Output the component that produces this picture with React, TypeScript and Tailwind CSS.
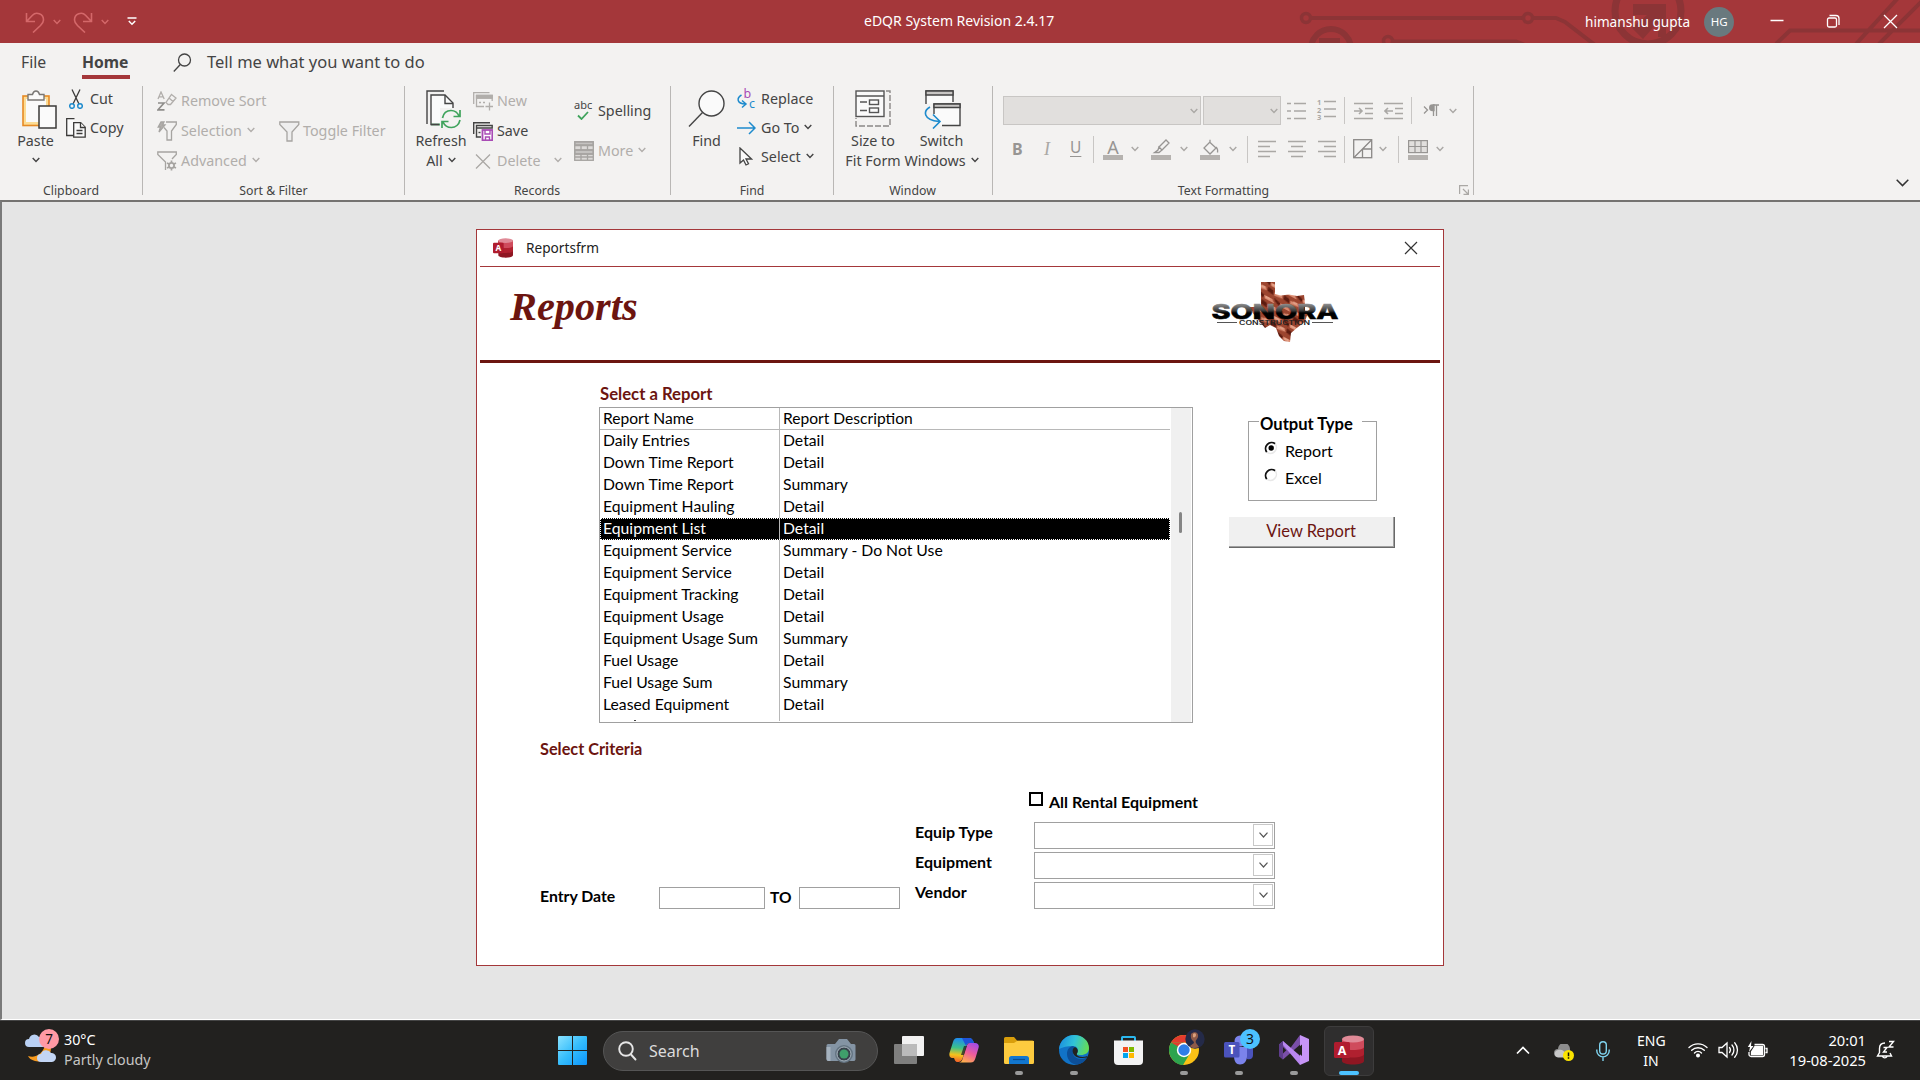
import React from 'react';

type P = { className?: string };

const Chevron = ({ className = '' }: P) => (
  <svg className={'shrink-0 ' + className} width="8" height="6" viewBox="0 0 8 6" fill="none" stroke="currentColor" strokeWidth="1.4">
    <path d="M0.7 1 4 4.5 7.3 1" />
  </svg>
);

const Sep = ({ className = '' }: P) => <div className={'w-px h-[27px] shrink-0 bg-[#c8c6c4] ' + className} />;

const AccessIcon = ({ className = '' }: P) => (
  <svg className={'shrink-0 ' + className} viewBox="0 0 30 30">
    <path d="M8 4v22c0 2 5 3.500 11 3.500s11-1.500 11-3.500V4z" fill="#8f1622" />
    <path d="M8 4v15c0 2 5 3.500 11 3.500s11-1.500 11-3.500V4z" fill="#b0202f" />
    <path d="M8 4v8c0 2 5 3 11 3s11-1 11-3V4z" fill="#cf4b5c" />
    <ellipse cx="19" cy="4" rx="11" ry="3.600" fill="#e08a97" />
    <rect x="0" y="7" width="16" height="16" rx="1.500" fill="#b01c2e" />
    <text x="8" y="19.500" textAnchor="middle" fill="#fff" fontFamily="Noto Sans, sans-serif" fontWeight="700" fontSize="12.500">A</text>
  </svg>
);

/* ---------------- Title bar ---------------- */

const Circuit = () => (
  <svg className="absolute left-[1290px] top-0" width="630" height="43" viewBox="1290 0 630 43" fill="none" stroke="#8c3436" strokeWidth="4">
    <circle cx="1306" cy="18" r="4.500" strokeWidth="3.500" />
    <path d="M1312 18h210" />
    <circle cx="1528" cy="18" r="4.500" strokeWidth="3.500" />
    <path d="M1534 18h22l9 4 30 23" />
    <circle cx="1331" cy="49" r="20" strokeWidth="6" />
    <rect x="1319" y="38" width="21" height="8" fill="#8c3436" stroke="none" />
    <circle cx="1388" cy="41" r="4.500" strokeWidth="3.500" />
    <path d="M1394 41.500h122l8 3" />
    <circle cx="1648" cy="11" r="33" strokeWidth="7" />
    <path d="M1633 4h33v33h-8V22l-15 17-11-11 15-13h-14z" fill="#8c3436" stroke="none" />
    <path d="M1776 44l14-13.500h130M1856 44 1898 -2M1879 44 1922 1" />
  </svg>
);

const TitleBar = () => (
  <header className="relative flex h-[43px] shrink-0 items-center whitespace-nowrap bg-[#a4373a] text-white">
    <Circuit />
    <div className="relative flex w-[864px] shrink-0 items-center text-[#d4686a]">
      <svg className="ml-[25px]" width="20" height="22" viewBox="0 0 20 22" fill="none" stroke="currentColor" strokeWidth="1.600">
        <path d="M1.500 2v8.500H10M2 10 7.500 4.200C11 .5 18.500 2.500 18.500 9c0 2.500-1.500 4-3 5.500L8 21.500" />
      </svg>
      <Chevron className="ml-[8px]" />
      <svg className="ml-[12px]" width="20" height="22" viewBox="0 0 20 22" fill="none" stroke="currentColor" strokeWidth="1.600">
        <path d="M18.500 2v8.500H10M18 10l-5.500-5.800C9 .5 1.500 2.500 1.500 9c0 2.500 1.500 4 3 5.500L12 21.500" />
      </svg>
      <Chevron className="ml-[8px]" />
      <svg className="ml-[18px] text-white" width="10" height="9" viewBox="0 0 10 9" fill="none" stroke="currentColor" strokeWidth="1.500">
        <path d="M0.500 1h9M1.800 4 5 7.200 8.200 4" />
      </svg>
    </div>
    <div className="relative w-[721px] shrink-0 text-[14px] leading-[20px] -mt-0.5">eDQR System Revision 2.4.17</div>
    <div className="relative text-[13.600px] leading-[20px]">himanshu gupta</div>
    <div className="relative ml-[14px] grid h-[30px] w-[30px] shrink-0 place-items-center rounded-full bg-[#69797e] text-[11.500px]">HG</div>
    <svg className="relative ml-[36px] shrink-0" width="152" height="20" viewBox="0 0 152 20" fill="none" stroke="#fff" strokeWidth="1.300">
      <path d="M7.500 9.500h13M121 4l13 13M134 4l-13 13" transform="translate(-7 -1)" />
      <rect x="57.500" y="6" width="9" height="9" rx="1.500" />
      <path d="M59.500 3.500h6.500a3 3 0 0 1 3 3v6.500" />
    </svg>
  </header>
);

const Tabs = () => (
  <nav className="flex h-[40px] shrink-0 text-[16.500px] leading-[37px] text-[#444]">
    <div className="ml-[21px] w-[61px] text-[15.800px] leading-[38px]">File</div>
    <div className="flex w-[48px] flex-col">
      <div className="h-[32px] text-[15.700px] font-bold leading-[38px]">Home</div>
      <div className="h-1 bg-[#a4373a]" />
    </div>
    <svg className="ml-[43px] mt-[10px]" width="19" height="20" viewBox="0 0 19 20" fill="none" stroke="#444" strokeWidth="1.300">
      <circle cx="11.500" cy="7" r="6" />
      <path d="M7.300 11.500 0.800 18.500" />
    </svg>
    <div className="ml-[15px]">Tell me what you want to do</div>
  </nav>
);

/* ---------------- Ribbon icons ---------------- */

const PasteIcon = () => (
  <svg width="36" height="39" viewBox="0 0 36 39" fill="none">
    <rect x="2" y="6" width="26" height="29.500" fill="#fcdc94" stroke="#e68a24" strokeWidth="1.600" />
    <rect x="5" y="9" width="20" height="23" fill="#fafafa" />
    <path d="M7 4.500h4.500C12 2.500 13 1 15 1s3 1.500 3.500 3.500H23V10H7z" fill="#fafafa" stroke="#797774" strokeWidth="1.400" />
    <rect x="18" y="16" width="17" height="22" fill="#fafafa" stroke="#3b3a39" strokeWidth="1.500" />
  </svg>
);

const CutIcon = () => (
  <svg width="14" height="20" viewBox="0 0 14 20" fill="none">
    <path d="M3 .5 10 15M11 .5 4 15" stroke="#3b3a39" strokeWidth="1.300" />
    <circle cx="3" cy="17" r="2.300" stroke="#1e8bcd" strokeWidth="1.500" />
    <circle cx="11" cy="17" r="2.300" stroke="#1e8bcd" strokeWidth="1.500" />
  </svg>
);

const CopyIcon = () => (
  <svg width="20" height="20" viewBox="0 0 20 20" fill="#fafafa" stroke="#3b3a39" strokeWidth="1.300">
    <path d="M7 17.500H.7V.7H8.500" />
    <path d="M7.700 4.700h7l4.500 4.500v10H7.700z" />
    <path d="M14.500 4.700v4.800h4.700M10.500 12.500h6M10.500 15.500h6" />
  </svg>
);

const RemoveSortIcon = () => (
  <svg width="20" height="20" viewBox="0 0 20 20" fill="none" stroke="#b1aeab" strokeWidth="1.300">
    <path d="M1 8 4 1l3.200 7M2 5.800h4.200" />
    <path d="M1 12h6L1 18.800h6.500" stroke="#8f8d8a" strokeWidth="1.700" />
    <path d="m14.500 3.500 4.500 3.500-5.500 6.500H11L9 11.500zM12 7l4 3.500" />
  </svg>
);

const Funnel = () => (
  <svg width="21" height="21" viewBox="0 0 21 21" fill="#eee" stroke="#a6a4a1" strokeWidth="1.300">
    <path d="M.8 1h19v2.500L13 11v9H8v-9L.8 3.500z" />
  </svg>
);

const SelectionIcon = () => (
  <svg width="20" height="20" viewBox="0 0 20 20" fill="none" stroke="#a6a4a1" strokeWidth="1.300">
    <path d="M9 1h10.300v2.500L14.500 10v9H10v-9L7 6.500" />
    <path d="M4 1h3L5.500 4H8l-6 7 1.500-5H1.200z" fill="#b1aeab" />
  </svg>
);

const AdvancedIcon = () => (
  <svg width="20" height="20" viewBox="0 0 20 20" fill="none" stroke="#a6a4a1" strokeWidth="1.300">
    <path d="M8.500 19V11L.8 3.500V1h18.500v2.500L15 8" />
    <circle cx="14.500" cy="14.500" r="2.600" strokeWidth="1.800" />
    <path d="M14.500 9.500v2M14.500 17.500v2M10 12l2 1M17 16l2 1M10 17l2-1M17 13l2-1" strokeWidth="1.700" />
  </svg>
);

const RefreshIcon = () => (
  <svg width="36" height="39" viewBox="0 0 36 39" fill="none" stroke="#444" strokeWidth="1.400">
    <path d="M1 34V1h17" />
    <path d="M5 5h14l8 8v21.500H5z" fill="#fafafa" />
    <path d="M19 5v8.500h8" />
    <path d="M14 18h22v21H14z" fill="#f3f2f1" stroke="none" />
    <path d="M5 34.500h9M16.500 28c1-5 4-7.500 8.500-7.500 4 0 6.500 2 8 5.500M34 20v6.500h-6.500M34 30c-1 4.500-4.500 7.500-8.500 7.500s-7-2-8.500-5.500M16 38v-6.500h6.500" stroke="#3fa35c" strokeWidth="1.700" />
    <path d="M5 34.500h8" />
  </svg>
);

const NewIcon = () => (
  <svg width="20" height="19" viewBox="0 0 20 19" fill="none" stroke="#b1aeab" strokeWidth="1.300">
    <path d="M.7 12V.7H16.500" />
    <path d="M11 14.500H3.500v-11h15.700V9M3.500 6h15.700M6 10.500h2M10 10.500h2" />
    <path d="M3.500 3.500h15.700V6H3.500z" fill="#b1aeab" />
    <path d="M16.500 10.500v8M12.500 14.500h8" />
  </svg>
);

const SaveIcon = () => (
  <svg width="20" height="19" viewBox="0 0 20 19" fill="none" stroke="#444" strokeWidth="1.400">
    <path d="M.7 12V.7H17" />
    <path d="M8 15H3.500V3.500h15.700V6H3.500" />
    <path d="M5.500 10.500h2" />
    <rect x="9.500" y="8" width="9.800" height="10.300" fill="#fff" stroke="#a94bb5" strokeWidth="1.800" />
    <path d="M12 8v4h5V8M12.500 18v-3h4v3" stroke="#a94bb5" />
  </svg>
);

const MoreIcon = () => (
  <svg width="20" height="20" viewBox="0 0 20 20" fill="#dcdad8" stroke="#a6a4a1" strokeWidth="1.300">
    <rect x=".7" y=".7" width="18.600" height="18.600" />
    <path d="M1 1h18v3H1zM1 9h18v4H1z" fill="#c4c2c0" />
    <path d="M.7 4.500h18.600M.7 9h18.600M.7 13h18.600M7 4.500V9M13.500 4.500V9M7 13v6M13.500 13v6M1 16h18" />
  </svg>
);

const SizeIcon = () => (
  <svg width="36" height="37" viewBox="0 0 36 37" fill="none" stroke="#555" strokeWidth="1.400">
    <path d="M31 1h4v35H1V28" strokeDasharray="6 2" stroke="#8a8886" />
    <rect x="1" y="1" width="28" height="25.500" fill="#fafafa" />
    <path d="M1 6h28M5 12h7M5 20.500h7" />
    <rect x="14.500" y="10" width="9" height="4.500" />
    <rect x="14.500" y="18" width="9" height="4.500" />
  </svg>
);

const SwitchIcon = () => (
  <svg width="38" height="39" viewBox="0 0 38 39" fill="none" stroke="#444" strokeWidth="1.400">
    <path d="M3 14V1h27v11" fill="#fafafa" />
    <path d="M3 1h27v4H3z" fill="#c8c6c4" />
    <path d="M11 14h26v21.500H18L11 25z" fill="#fafafa" stroke="none" />
    <path d="M11 24V14h26v21.500H19" />
    <path d="M11 14h26v3.500H11z" fill="#c8c6c4" />
    <path d="M7 17c-7 4-7 13 9 14.500M10 24.500l7 7-7 7" stroke="#1e8bcd" strokeWidth="1.600" />
  </svg>
);

const FindIcon = () => (
  <svg width="37" height="38" viewBox="0 0 37 38" fill="none" stroke="#444" strokeWidth="1.400">
    <circle cx="23.500" cy="13.500" r="12.500" fill="#fafafa" />
    <path d="M14.500 22.500 1 36.500" />
  </svg>
);

const ReplaceIcon = () => (
  <svg className="overflow-visible" width="19" height="21" viewBox="0 0 19 21" fill="none">
    <text x="6.500" y="10" fontFamily="Noto Sans, sans-serif" fontSize="12.500" fill="#a94bb5">b</text>
    <text x="12" y="20" fontFamily="Noto Sans, sans-serif" fontSize="12.500" fill="#1e8bcd">c</text>
    <path d="M4.500 7C-.5 10-.5 15.500 8.500 16M5 12.500 9 16l-4 3.500" stroke="#1e8bcd" strokeWidth="1.500" />
  </svg>
);

const Lines = ({ d }: { d: string }) => (
  <svg width="19" height="20" viewBox="0 0 19 20" fill="none" stroke="#aaa8a5" strokeWidth="1.600" className="shrink-0">
    <path d={d} />
  </svg>
);

/* ---------------- Ribbon ---------------- */

const Group = ({ label, width, labelClass = '', children }: { label: string; width: string; labelClass?: string; children: React.ReactNode }) => (
  <section className={'flex h-[109px] shrink-0 flex-col border-r border-[#b9b7b5] ' + width}>
    <div className="flex h-[98px] shrink-0 items-start">{children}</div>
    <div className={'text-center text-[12.300px] leading-[14px] text-[#444] ' + labelClass}>{label}</div>
  </section>
);

const Item = ({ icon, label, chevron, off, className = '' }: { icon: React.ReactNode; label: string; chevron?: string; off?: boolean; className?: string }) => (
  <div className={'flex items-center ' + (off ? 'text-[#b1aeab] ' : 'text-[#444] ') + className}>
    <div className="flex w-[24px] shrink-0 items-center">{icon}</div>
    <span className="whitespace-nowrap">{label}</span>
    {chevron && <Chevron className={'mb-0.5 ' + chevron} />}
  </div>
);

const Big = ({ icon, lines, chevron, className = '' }: { icon: React.ReactNode; lines: string[]; chevron?: boolean; className?: string }) => (
  <div className={'flex shrink-0 flex-col items-center whitespace-nowrap text-[#444] ' + className}>
    <div className="h-[41px] pt-1">{icon}</div>
    <div className="mt-1 leading-[20px]">{lines[0]}</div>
    <div className="flex h-[20px] items-center gap-[5px] leading-[20px]">
      {lines[1]}
      {chevron && <Chevron className="mb-0.5" />}
    </div>
  </div>
);

const Swatch = ({ className = '', children }: P & { children: React.ReactNode }) => (
  <div className={'flex w-[20px] shrink-0 flex-col items-center ' + className}>
    <div className="grid h-[16px] place-items-center">{children}</div>
    <div className="h-[5px] w-[20px] bg-[#b5b2af]" />
  </div>
);

const Ribbon = () => (
  <div className="flex h-[117px] shrink-0 pt-[3px] text-[14.300px]">
    <Group label="Clipboard" width="w-[143px]">
      <Big className="ml-[15px] w-[41px]" icon={<div className="pl-1.5"><PasteIcon /></div>} lines={['Paste']} chevron />
      <div className="-mt-px ml-[10px] flex flex-col">
        <Item className="h-[27px]" icon={<div className="pl-[3px]"><CutIcon /></div>} label="Cut" />
        <Item className="mt-[2px] h-[27px]" icon={<CopyIcon />} label="Copy" />
      </div>
    </Group>
    <Group label="Sort & Filter" width="w-[262px]">
      <div className="ml-[14px] flex w-[122px] flex-col">
        <Item off className="h-[30px]" icon={<RemoveSortIcon />} label="Remove Sort" />
        <Item off className="h-[30px]" icon={<SelectionIcon />} label="Selection" chevron="ml-[5px]" />
        <Item off className="h-[30px]" icon={<AdvancedIcon />} label="Advanced" chevron="ml-[5px]" />
      </div>
      <Item off className="mt-[30px] h-[30px]" icon={<Funnel />} label="Toggle Filter" />
    </Group>
    <Group label="Records" width="w-[266px]" labelClass="pr-px">
      <Big className="ml-[10px] w-[52px]" icon={<div className="pl-1.5"><RefreshIcon /></div>} lines={['Refresh', 'All']} chevron />
      <div className="ml-[6px] flex w-[101px] flex-col">
        <Item off className="h-[30px]" icon={<NewIcon />} label="New" />
        <Item className="h-[30px]" icon={<SaveIcon />} label="Save" />
        <Item off className="h-[30px]" icon={<svg width="17" height="15" viewBox="0 0 17 15" className="ml-[2px]" stroke="#aaa8a5" strokeWidth="1.300"><path d="M1 .5l14 14M15 .5l-14 14" /></svg>} label="Delete" chevron="ml-[14px]" />
      </div>
      <div className="flex flex-col pt-[10px]">
        <Item className="h-[30px]" icon={
          <div className="flex flex-col items-center text-[11px] leading-[10px] text-[#444] -mt-0.5">
            abc
            <svg className="mt-px" width="12" height="9" viewBox="0 0 12 9" fill="none" stroke="#3fa35c" strokeWidth="1.800"><path d="M1 4.500 4.500 8 11 1" /></svg>
          </div>} label="Spelling" />
        <Item off className="mt-[10px] h-[30px]" icon={<MoreIcon />} label="More" chevron="ml-[5px]" />
      </div>
    </Group>
    <Group label="Find" width="w-[163px]">
      <Big className="ml-[17px] w-[37px]" icon={<FindIcon />} lines={['Find']} />
      <div className="ml-[12px] flex flex-col -mt-[2px]">
        <Item className="h-[29px]" icon={<ReplaceIcon />} label="Replace" />
        <Item className="h-[29px]" icon={<svg width="19" height="14" viewBox="0 0 19 14" fill="none" stroke="#1e8bcd" strokeWidth="1.500"><path d="M0 7h18M12 1l6 6-6 6" /></svg>} label="Go To" chevron="ml-[5px]" />
        <Item className="h-[29px]" icon={<svg className="ml-[2px]" width="14" height="19" viewBox="0 0 14 19" fill="#fafafa" stroke="#444" strokeWidth="1.300"><path d="M1 1v15l3.500-3 2.500 5 2.500-1.200L7 12h5.500z" /></svg>} label="Select" chevron="ml-[5px]" />
      </div>
    </Group>
    <Group label="Window" width="w-[159px]" labelClass="pr-px">
      <Big className="ml-[11px] w-[56px]" icon={<SizeIcon />} lines={['Size to', 'Fit Form']} />
      <Big className="ml-[3px] w-[75px]" icon={<SwitchIcon />} lines={['Switch', 'Windows']} chevron />
    </Group>
    <Group label="Text Formatting" width="w-[481px]" labelClass="pr-[19px]">
      <div className="flex w-[480px] flex-col text-[#aaa8a5]">
        <div className="flex h-[29px] w-full items-center mt-[10px]">
          <div className="ml-[10px] flex h-[29px] w-[198px] items-center justify-end border border-[#c8c6c4] bg-[#e1dfdd] pr-[2px]"><Chevron /></div>
          <div className="ml-[2px] flex h-[29px] w-[78px] items-center justify-end border border-[#c8c6c4] bg-[#e1dfdd] pr-[2px]"><Chevron /></div>
          <div className="ml-[6px] flex"><Lines d="M0 2.500h4M7 2.500h12M0 10h4M7 10h12M0 17.500h4M7 17.500h12" /></div>
          <div className="ml-[11px] flex w-[19px]">
            <div className="flex w-[6px] flex-col text-[7.500px] font-bold leading-[7.500px]"><span>1</span><span>2</span><span>3</span></div>
            <svg width="13" height="20" viewBox="0 0 13 20" stroke="currentColor" strokeWidth="1.600"><path d="M1 2.500h12M1 10h12M1 17.500h12" /></svg>
          </div>
          <Sep className="ml-[8px]" />
          <div className="ml-[9px] flex"><Lines d="M0 2.500h19M11 7.500h8M11 12.500h8M0 17.500h19M0 10h8M5 7l3 3-3 3" /></div>
          <div className="ml-[11px] flex"><Lines d="M0 2.500h19M11 7.500h8M11 12.500h8M0 17.500h19M1 10h8M4 7l-3 3 3 3" /></div>
          <Sep className="ml-[8px]" />
          <svg className="ml-[11px]" width="17" height="13" viewBox="0 0 17 13" fill="none" stroke="#979593" strokeWidth="1.300">
            <path d="M1 2.500 4.500 6 1 9.500M10.500 1v11M13.500 1v11M16 1h-6" />
            <path d="M11 1H9.500a2.800 2.800 0 0 0 0 5.600H11z" fill="#979593" />
          </svg>
          <Chevron className="ml-[9px]" />
        </div>
        <div className="flex h-[28px] items-center mt-[10px] text-[16px]">
          <span className="ml-[19px] w-[30px] font-bold text-[#979593]">B</span>
          <span className="w-[27px] pl-0.5 font-['Liberation_Serif',serif] text-[18px] italic">I</span>
          <span className="-mt-[2px] w-[24px] pl-px text-[15.500px] text-[#979593] underline underline-offset-[3px]">U</span>
          <Sep />
          <Swatch className="ml-[9px]"><span className="text-[18px] leading-[16px] text-[#979593]">A</span></Swatch>
          <Chevron className="ml-[8px]" />
          <Swatch className="ml-[12px]"><svg width="18" height="16" viewBox="0 0 18 16" fill="none" stroke="#979593" strokeWidth="1.300"><path d="M7 8 14 1l3 3-7 7zM7 8l3 3-3 2.500H2.500L6 11z" /></svg></Swatch>
          <Chevron className="ml-[9px]" />
          <Swatch className="ml-[12px]"><svg width="18" height="16" viewBox="0 0 18 16" fill="none" stroke="#979593" strokeWidth="1.300"><path d="M8.500 3 15 9l-6 6L3 9l6-6V.8M15 8c1.500 1.500 2 3 1.500 5.500" /></svg></Swatch>
          <Chevron className="ml-[9px]" />
          <Sep className="ml-[10px]" />
          <div className="ml-[10px] flex"><Lines d="M0 2.500h18M0 7.500h12M0 12.500h18M0 17.500h12" /></div>
          <div className="ml-[11px] flex"><Lines d="M0 2.500h18M3 7.500h12M0 12.500h18M3 17.500h12" /></div>
          <div className="ml-[11px] flex"><Lines d="M0 2.500h18M6 7.500h12M0 12.500h18M6 17.500h12" /></div>
          <Sep className="ml-[7px]" />
          <svg className="ml-[8px]" width="20" height="20" viewBox="0 0 20 20" fill="none" stroke="#8a8886" strokeWidth="1.300"><rect x=".7" y=".7" width="18" height="18" /><path d="M1 18.500 18.500 1M9.500 10h9M9.500 10v9" /></svg>
          <Chevron className="ml-[6px]" />
          <Sep className="ml-[11px]" />
          <Swatch className="ml-[9px]"><svg width="20" height="14" viewBox="0 0 20 14" fill="#e1dfdd" stroke="#979593" strokeWidth="1.200"><rect x=".6" y=".6" width="18.800" height="12" /><path d="M.6 6.500h18.800M7 .6v12M13 .6v12" /></svg></Swatch>
          <Chevron className="ml-[8px]" />
        </div>
        <svg className="ml-[466px] mt-[22px] shrink-0" width="10" height="10" viewBox="0 0 10 10" fill="none" stroke="currentColor" strokeWidth="1.200"><path d="M.6 9V.6H9M4 4l5 5M9.400 4.500v4.900H4.500" /></svg>
      </div>
    </Group>
    <svg className="ml-[422px] mt-[93px] shrink-0" width="13" height="8" viewBox="0 0 13 8" fill="none" stroke="#333" strokeWidth="1.500"><path d="M.7.8 6.500 6.600 12.300.8" /></svg>
  </div>
);

/* ---------------- Reports form ---------------- */

const REPORTS: [string, string][] = [
  ['Daily Entries', 'Detail'],
  ['Down Time Report', 'Detail'],
  ['Down Time Report', 'Summary'],
  ['Equipment Hauling', 'Detail'],
  ['Equipment List', 'Detail'],
  ['Equipment Service', 'Summary - Do Not Use'],
  ['Equipment Service', 'Detail'],
  ['Equipment Tracking', 'Detail'],
  ['Equipment Usage', 'Detail'],
  ['Equipment Usage Sum', 'Summary'],
  ['Fuel Usage', 'Detail'],
  ['Fuel Usage Sum', 'Summary'],
  ['Leased Equipment', 'Detail'],
];

const Logo = () => (
  <svg className="mt-[13px] mr-[99px]" width="130" height="64" viewBox="0 0 130 64">
    <defs>
      <linearGradient id="metal" gradientUnits="userSpaceOnUse" x1="0" y1="24" x2="0" y2="39">
        <stop offset="0" stopColor="#8e8e8e" />
        <stop offset="0.450" stopColor="#3a3a3a" />
        <stop offset="0.600" stopColor="#000" />
        <stop offset="1" stopColor="#000" />
      </linearGradient>
      <pattern id="rock" width="18" height="14" patternUnits="userSpaceOnUse" patternTransform="rotate(28)">
        <rect width="18" height="14" fill="#9c452f" />
        <path d="M0 2h9l4 3H2zM8 9l8-1 2 3-9 1z" fill="#d98a70" />
        <path d="M10 0l8 2v3l-5-2zM0 7l6 1 2 4-7-1z" fill="#5c1b10" />
        <path d="M2 3l5 0M11 9l4 0" stroke="#f0b8a0" strokeWidth="1" />
      </pattern>
    </defs>
    <path d="M50 2h14v12l6 1.500 8-1 8 1.500 7-1 1 8v7l2 5-2 7-7 5-7 6-1 9-6-1-5-5-3-8-6-3-5 3-5-6-8-10-3-5h12z" fill="url(#rock)" />
    <text x="0.500" y="38.500" textLength="127" lengthAdjust="spacingAndGlyphs" fontFamily="Inter, sans-serif" fontWeight="800" fontSize="20" fill="url(#metal)" stroke="url(#metal)" strokeWidth="0.500">SONORA</text>
    <text x="28" y="45" textLength="71" lengthAdjust="spacingAndGlyphs" fontFamily="Inter, sans-serif" fontWeight="600" fontSize="5.500" fill="#222">CONSTRUCTION</text>
    <path d="M6 42.500h20M101 42.500h21" stroke="#555" />
  </svg>
);

const Radio = ({ on }: { on?: boolean }) => (
  <svg width="14" height="14" viewBox="0 0 14 14" fill="none" className="shrink-0">
    <path d="M2.800 11.200A6 6 0 0 1 11.200 2.800" stroke="#111" strokeWidth="1.800" />
    <path d="M2.800 11.200A6 6 0 0 0 11.200 2.800" stroke="#e8e8e8" strokeWidth="1.500" />
    {on && <circle cx="7.200" cy="7" r="2.700" fill="#000" />}
  </svg>
);

const Combo = () => (
  <div className="mt-px flex h-[27px] w-[241px] justify-end border border-[#a0a0a0] bg-white">
    <div className="m-px mb-0.5 grid w-[20px] place-items-center border border-[#c8c8c8] text-[#555]">
      <svg width="9" height="6" viewBox="0 0 9 6" fill="none" stroke="currentColor" strokeWidth="1.200"><path d="M.5.7 4.500 5 8.500.7" /></svg>
    </div>
  </div>
);

const ReportsForm = () => (
  <div className="ml-[474px] mt-[27px] flex h-[737px] w-[968px] flex-col border border-[#a4373a] bg-white px-[3px] font-['Lato',sans-serif] text-[15.600px] text-black">
    <div className="flex h-[37px] items-center border-b border-[#a4373a] font-['Noto_Sans',sans-serif] text-[13.650px] text-[#222]">
      <AccessIcon className="ml-[13px] h-[20px] w-[20px]" />
      <span className="ml-[13px] mt-px flex-1">Reportsfrm</span>
      <svg className="mr-[22px]" width="14" height="14" viewBox="0 0 14 14" stroke="#333" strokeWidth="1.200"><path d="M1 1l12 12M13 1 1 13" /></svg>
    </div>
    <div className="flex h-[96px] justify-between border-b-[3px] border-[#6c1510]">
      <h1 className="ml-[30px] mt-[18px] font-['Liberation_Serif','Times_New_Roman',serif] text-[40.300px] font-bold italic leading-[44px] text-[#6c1510]">Reports</h1>
      <Logo />
    </div>
    <div className="flex">
      <div className="ml-[119px] mt-[19px]">
        <div className="h-[25px] pl-px text-[16.700px] font-bold leading-[24px] text-[#6c1510]">Select a Report</div>
        <div className="flex h-[316px] w-[594px] overflow-hidden border border-[#a0a0a0]">
          <div className="w-[570px]">
            <div className="flex h-[22px] border-b border-[#b8b8b8] leading-[21px]">
              <div className="w-[180px] shrink-0 border-r border-[#b8b8b8] pl-[3px]">Report Name</div>
              <div className="pl-[3px]">Report Description</div>
            </div>
            {REPORTS.map(([name, desc], i) => (
              <div key={i} className={'flex h-[22px] text-[15.750px] leading-[20px] ' + (i === 4 ? 'bg-black text-white outline-1 -outline-offset-1 outline-dotted outline-white' : '')}>
                <div className="w-[180px] shrink-0 whitespace-nowrap border-r border-[#b8b8b8] pl-[3px]">{name}</div>
                <div className="pl-[3px]">{desc}</div>
              </div>
            ))}
            <div className="flex h-[5px] w-[180px] items-end border-r border-[#b8b8b8] pl-[34px]">
              <div className="h-px w-[2px] bg-[#444]" />
            </div>
          </div>
          <div className="ml-px w-[20px] bg-[#f0f0f0] pl-[8px] pt-[104px]">
            <div className="h-[21px] w-[3px] rounded-full bg-[#858585]" />
          </div>
        </div>
      </div>
      <div className="ml-[36px] mt-[48px] flex flex-col">
        <div className="ml-[19px] h-[90px] w-[129px]">
          <div className="relative flex h-[20px] items-center text-[16.600px] leading-[20px] font-bold">
            <div className="h-px w-[11px] self-center bg-[#a0a0a0]" />
            <span className="ml-px flex-1 whitespace-nowrap pt-[5px]">Output Type</span>
            <div className="h-px w-[15px] bg-[#a0a0a0]" />
          </div>
          <div className="-mt-[10px] h-[80px] border border-t-0 border-[#a0a0a0] pt-[17px]">
            <div className="ml-[15px] flex h-[27px] items-start"><div className="pt-[3px]"><Radio on /></div><span className="ml-[7px] mt-[3px] leading-[20px] text-[16.100px]">Report</span></div>
            <div className="ml-[15px] flex h-[27px] items-start"><div className="pt-[3px]"><Radio /></div><span className="ml-[7px] mt-[3px] leading-[20px] text-[16.100px]">Excel</span></div>
          </div>
        </div>
        <div className="mt-[16px] h-[31px] w-[166px] border-r border-b border-[#696969] bg-[#f0f0f0]">
          <div className="h-full border-r border-b border-[#a0a0a0] text-center text-[16.500px] leading-[29px] text-[#6c1510]">View Report</div>
        </div>
      </div>
    </div>
    <div className="ml-[60px] mt-[14px] h-[24px] text-[16.300px] font-bold leading-[24px] text-[#6c1510]">Select Criteria</div>
    <div className="mt-[30px] flex flex-1 text-[16px] font-bold">
      <div className="ml-[60px] flex h-[22px] mt-[96px] w-[375px] leading-[17px]">
        <span className="w-[119px] shrink-0 text-[15.800px]">Entry Date</span>
        <div className="h-[22px] w-[106px] shrink-0 border border-[#a0a0a0]" />
        <span className="ml-[5px] w-[29px] shrink-0 text-[15.500px] leading-[21px]">TO</span>
        <div className="h-[22px] w-[101px] shrink-0 border border-[#a0a0a0]" />
      </div>
      <div className="flex flex-col">
        <div className="ml-[114px] flex h-[30px]">
          <div className="mt-px h-[14px] w-[14px] border-2 border-black" />
          <span className="ml-[6px] leading-[22px]">All Rental Equipment</span>
        </div>
        {['Equip Type', 'Equipment', 'Vendor'].map((l) => (
          <div key={l} className="flex h-[30px]">
            <span className="w-[119px] leading-[22px]">{l}</span>
            <Combo />
          </div>
        ))}
      </div>
    </div>
  </div>
);

/* ---------------- Taskbar ---------------- */

const Cell = ({ children, mark = 'none' }: { children: React.ReactNode; mark?: 'none' | 'open' | 'active' }) => (
  <div className="flex w-[55px] shrink-0 justify-center">
    <div className={'relative flex h-[50px] w-[50px] flex-col items-center rounded-md ' + (mark === 'active' ? 'border border-[#3d3c3c] bg-[#2f2e2e] pt-[8px]' : 'pt-[9px]')}>
      {children}
      {mark === 'open' && <div className="absolute bottom-px h-[4px] w-[8px] rounded-full bg-[#9a9a9a]" />}
      {mark === 'active' && <div className="absolute bottom-0 h-[4px] w-[20px] rounded-full bg-[#4cc2ff]" />}
    </div>
  </div>
);

const Taskbar = () => (
  <footer className="flex h-[60px] shrink-0 items-center border-t border-[#454545] bg-[#22211f] text-white">
    <svg className="ml-[24px] -mt-[12px] shrink-0" width="36" height="36" viewBox="0 0 36 36">
      <path d="M5 31c6 2 13 0 17-10 1-3 5-2 6 2 0 9-8 15-16 13-4-1-6-3-7-5z" fill="#f79a1e" transform="translate(-1 -2)" />
      <path d="M5 20a4 4 0 0 1 0-8 5.500 5.500 0 0 1 10-2 5 5 0 0 1 4 10z" fill="#b9d0f3" />
      <path d="M17 35a4 4 0 0 1 0-8 5.500 5.500 0 0 1 10-1 4.500 4.500 0 0 1 1 9z" fill="#c3d6f5" />
      <circle cx="25" cy="12" r="10" fill="#ff99a4" />
      <text x="25" y="17" textAnchor="middle" fontFamily="Noto Sans, sans-serif" fontSize="13.500" fill="#111">7</text>
    </svg>
    <div className="ml-[4px] -mt-px w-[494px] shrink-0 text-[14.300px] leading-[20.500px]">
      <div>30°C</div>
      <div className="text-[#c6c5c4]">Partly cloudy</div>
    </div>
    <svg className="shrink-0" width="29" height="29" viewBox="0 0 29 29">
      <defs><linearGradient id="win" x1="0" y1="0" x2="1" y2="1"><stop offset="0" stopColor="#8be3ff" /><stop offset="0.500" stopColor="#35bdfc" /><stop offset="1" stopColor="#0b94fb" /></linearGradient></defs>
      <path d="M1 0h13v14H0V1a1 1 0 0 1 1-1zM15 0h13a1 1 0 0 1 1 1v13H15zM0 15h14v14H1a1 1 0 0 1-1-1zM15 15h14v13a1 1 0 0 1-1 1H15z" fill="url(#win)" />
    </svg>
    <div className="ml-[16px] flex h-[40px] w-[275px] shrink-0 items-center rounded-full border border-[#555] bg-[#403f3e] text-[16px] text-[#dcdcdc]">
      <svg className="ml-[14px]" width="19" height="20" viewBox="0 0 19 20" fill="none" stroke="#e6e6e6" strokeWidth="1.900" strokeLinecap="round"><circle cx="8" cy="8" r="6.800" /><path d="M13 13.500l4.500 5" /></svg>
      <span className="ml-[12px] flex-1">Search</span>
      <svg className="mr-[21px]" width="30" height="26" viewBox="0 0 30 26">
        <path d="M2 6h7l4-5h8l4 5h3a1.500 1.500 0 0 1 1.500 1.500v14A2 2 0 0 1 27.500 23H2.500A2 2 0 0 1 .5 21V7.500A1.500 1.500 0 0 1 2 6z" fill="#8494a4" />
        <path d="M.5 9h4v14h-2a2 2 0 0 1-2-2z" fill="#a5b2be" />
        <circle cx="18" cy="16" r="9" fill="#647482" /><circle cx="18" cy="16" r="7" fill="#38424c" stroke="#a9b5bf" strokeWidth="1" /><circle cx="18" cy="16" r="4.500" fill="#3f9f6b" />
      </svg>
    </div>
    <div className="ml-[3px] flex">
      <Cell><svg className="mt-px" width="30" height="28" viewBox="0 0 30 28"><rect x="8" width="22" height="20" rx="1" fill="#f2f2f2" /><rect y="8" width="23" height="20" rx="1" fill="#8f8f8f" fillOpacity=".85" /><rect x="8" y="8" width="15" height="12" fill="#bbb" /></svg></Cell>
      <Cell>
        <svg width="30" height="30" viewBox="0 0 30 30">
          <defs>
            <linearGradient id="cpa" x1="0.300" y1="0" x2="0.200" y2="1"><stop offset="0" stopColor="#1f8af0" /><stop offset="0.400" stopColor="#3cc28a" /><stop offset="0.700" stopColor="#f5c31c" /><stop offset="1" stopColor="#f25a2a" /></linearGradient>
            <linearGradient id="cpb" x1="0.800" y1="0" x2="0.300" y2="1"><stop offset="0" stopColor="#a34be8" /><stop offset="0.500" stopColor="#ee5c9c" /><stop offset="1" stopColor="#ffb04a" /></linearGradient>
          </defs>
          <path d="M8 3h12c3 0 4 2 5 5h-4c-2 0-3 1-4 4l-3 10c-1 4-3 5-5 5-3 0-3-2-4-4H4c-3 0-4-2-3.500-5L4 7c1-3 2-4 4-4z" fill="url(#cpa)" />
          <path d="M13 3h7c3 0 4 2 5 5h-4c-2 0-3 .5-4 3z" fill="#1f54d8" />
          <path d="M21 8h5c3 0 4.500 2 3.500 5l-3 10c-1 3-2 4.500-5 4.500H9c3 0 4-1 5-5l3-10c1-3 2-4.500 4-4.500z" fill="url(#cpb)" />
          <path d="M15 11h3l-3 9h-3z" fill="#22211f" opacity=".75" />
        </svg>
      </Cell>
      <Cell mark="open"><svg className="mt-[2px]" width="30" height="27" viewBox="0 0 30 27"><path d="M0 1.500A1.500 1.500 0 0 1 1.500 0H10l3 3.500h15.500A1.500 1.500 0 0 1 30 5v4H0z" fill="#d99e0b" /><path d="M0 6h10l3-2h17v21.500a1.500 1.500 0 0 1-1.500 1.500h-27A1.500 1.500 0 0 1 0 25.500z" fill="#fdcb3f" /><path d="M5 27v-5.500A2.500 2.500 0 0 1 7.500 19h15a2.500 2.500 0 0 1 2.500 2.500V27z" fill="#1277cf" /><path d="M9 22.500h12" stroke="#0a4d8f" strokeWidth="1.200" /></svg></Cell>
      <Cell mark="open">
        <svg width="30" height="30" viewBox="0 0 30 30">
          <defs><linearGradient id="edg" x1="0" y1="0.300" x2="1" y2="0.500"><stop offset="0" stopColor="#1b8fe0" /><stop offset="0.500" stopColor="#31c3d8" /><stop offset="1" stopColor="#65dd55" /></linearGradient></defs>
          <circle cx="15" cy="15" r="15" fill="#1173c7" />
          <path d="M0 14C1 5 8 0 15 0c9 0 15 6 15 13 0 5-4 7-8 7-4 0-5-1-4-2 2-2 1-7-4-7C8 11 4 12 0 14z" fill="url(#edg)" />
          <path d="M14 11c-5 1-6 5-6 8 0 6 5 11 11 10.500 4-1 7-3 9-7-6 3-15 1-14-6 0-2 1-3 2-4z" fill="#0c4f98" />
          <path d="M16 12c-2 1-3 3-2 6 1 4 7 6 14 4.500 1-1 0-1.500-1-1-3 1-8 .5-9-1.500-.5-1 0-1.500.5-2.500 1-2 0-4.500-2.500-5.500z" fill="#22211f" />
        </svg>
      </Cell>
      <Cell><svg className="mt-px" width="29" height="29" viewBox="0 0 29 29"><path d="M8 5V1.500A.8.800 0 0 1 8.800 1h11.400a.8.800 0 0 1 .8.800V5" fill="none" stroke="#2bb8ee" strokeWidth="2" /><path d="M0 4.500h29V25a4 4 0 0 1-4 4H4a4 4 0 0 1-4-4z" fill="#f3f3f3" /><path d="M9 11h5v5H9z" fill="#f25022" /><path d="M15 11h5v5h-5z" fill="#7fba00" /><path d="M9 17h5v5H9z" fill="#00a4ef" /><path d="M15 17h5v5h-5z" fill="#ffb900" /></svg></Cell>
      <Cell mark="open">
        <svg className="-mt-[6px] ml-[6px] shrink-0" width="36" height="36" viewBox="0 0 36 36">
          <g transform="translate(0 6)">
            <circle cx="15" cy="15" r="15" fill="#fbc116" />
            <path d="M2 7.500A15 15 0 0 1 28 7.500H15z" fill="#e33b2e" />
            <path d="M2 7.500A15 15 0 0 0 14 30l7.500-12.500L15 20z" fill="#2da44e" />
            <path d="M2 7.500 8.500 18.500 15 15V7.500z" fill="#2da44e" /><path d="M2 7.500 15 7.500 10 12z" fill="#e33b2e" />
            <circle cx="15" cy="15" r="7.200" fill="#fff" /><circle cx="15" cy="15" r="5.700" fill="#2f7de8" />
          </g>
          <circle cx="26" cy="10" r="9.700" fill="#242a48" />
          <path d="M22 5c3-3 8-2 7 3-1 3-3 3-2 6l3 4c-4 2-8 1-9-1l4-3c0-3-4-2-3-9z" fill="#8f5a48" />
          <path d="M24 5c1-1 3-1 3 1s-2 3-3 2z" fill="#dba07c" />
        </svg>
      </Cell>
      <Cell mark="open">
        <svg className="-mt-[6px] ml-[6px] shrink-0" width="36" height="36" viewBox="0 0 36 36">
          <circle cx="16" cy="12" r="5.500" fill="#7b83eb" /><circle cx="25" cy="15" r="4" fill="#5059c9" />
          <path d="M20 18h9v8c0 4-3 5-6 4z" fill="#4b53bc" />
          <path d="M10 18h13v9c0 5-3 8.500-7 8.500S10 32 10 27z" fill="#7b83eb" />
          <rect y="13" width="15.500" height="15.500" rx="1.500" fill="#4b53bc" />
          <text x="7.700" y="25" textAnchor="middle" fill="#fff" fontFamily="Noto Sans, sans-serif" fontWeight="700" fontSize="11.500">T</text>
          <circle cx="26" cy="10" r="10" fill="#4cc2ff" />
          <text x="26" y="15" textAnchor="middle" fill="#111" fontFamily="Noto Sans, sans-serif" fontSize="14">3</text>
        </svg>
      </Cell>
      <Cell mark="open"><svg width="30" height="30" viewBox="0 0 30 30"><path d="M0 9.500 4 6l7 7.500L21 0l2 8L4 24.500l-4-3.500z" fill="#7a4fa8" /><path d="M0 9.500 4 6v18.500L0 21z" fill="#5f3d8c" /><path d="M4 6l19 16.500L21 30 4 10z" fill="#b987f0" /><path d="M21 0l9 4v22l-9 4z" fill="#c795f7" /><path d="M23 9.500v11.500L16 15.200z" fill="#22211f" /><path d="M4 12v6.500L7.300 15.200z" fill="#22211f" /></svg></Cell>
      <Cell mark="active"><AccessIcon className="h-[30px] w-[30px]" /></Cell>
    </div>
    <div className="flex h-full flex-1 items-center">
      <svg className="ml-[140px] shrink-0" width="14" height="9" viewBox="0 0 14 9" fill="none" stroke="#fff" strokeWidth="1.700"><path d="M1 7.500 7 1.500l6 6" /></svg>
      <svg className="ml-[24px] mt-[4px] shrink-0" width="20" height="18" viewBox="0 0 20 18"><path d="M4 13a4 4 0 0 1 0-8 6 6 0 0 1 12 0v8z" fill="#8d8d8d" /><path d="M4 13.500a3.800 3.800 0 0 1 0-7.500c4-1 6 1 7 3v4.500z" fill="#c8c8c8" /><circle cx="14.500" cy="11.500" r="5.500" fill="#fbe400" /><path d="M14.500 8.500v3.700M14.500 13.200v1.500" stroke="#111" strokeWidth="1.500" /></svg>
      <svg className="ml-[22px] shrink-0" width="14" height="20" viewBox="0 0 14 20" fill="none" stroke="#7fd3ee" strokeWidth="1.400"><rect x="3.700" y=".7" width="6.600" height="12.300" rx="3.300" /><path d="M.8 8.500v1.200a6 6 0 0 0 12.400 0V8.500M7 16v4" /></svg>
      <div className="ml-[27px] w-[28px] shrink-0 text-center text-[14px] leading-[20px]"><div>ENG</div><div>IN</div></div>
      <svg className="ml-[23px] -mt-[2px] shrink-0" width="20" height="16" viewBox="0 0 20 16" fill="none" stroke="#fff" strokeWidth="1.400" strokeLinecap="round"><path d="M1 5.500a13 13 0 0 1 18 0M3.700 8.300a9 9 0 0 1 12.600 0M6.500 11a5 5 0 0 1 7 0" /><circle cx="10" cy="13.500" r="1.300" fill="#fff" /></svg>
      <svg className="ml-[10px] -mt-[2px] shrink-0" width="21" height="18" viewBox="0 0 21 18" fill="none" stroke="#fff" strokeWidth="1.300" strokeLinecap="round"><path d="M1 6.500h3L9 2v14l-5-4.500H1zM11.500 6.500a4 4 0 0 1 0 5M14 4a7.500 7.500 0 0 1 0 10M16.700 1.700a11 11 0 0 1 0 14.600" /></svg>
      <svg className="ml-[8px] -mt-[2px] shrink-0" width="21" height="18" viewBox="0 0 21 18" fill="none" stroke="#fff" strokeWidth="1.300"><path d="M7.500 3.500h8a2 2 0 0 1 2 2v8a2 2 0 0 1-2 2H4a2 2 0 0 1-2-2V11M18.500 7.500H20v4h-1.500" /><path d="M8 5.500h7.500v8H4.500V11z" fill="#fff" /><path d="M4.500 0 .8 6H3L2 11l4.500-6H4z" fill="#fff" stroke="none" /></svg>
      <div className="-mt-px ml-[17px] w-[81px] shrink-0 text-right text-[14.700px] leading-[20px] whitespace-nowrap"><div>20:01</div><div>19-08-2025</div></div>
      <svg className="ml-[10px] -mt-px shrink-0" width="20" height="20" viewBox="0 0 20 20" fill="none" stroke="#fff" strokeWidth="1.400"><path d="M9 3C5 3 3.500 5.500 3.500 8.500v4L1.500 16h14l-1.500-3M6.500 16.500a2.500 2.500 0 0 0 4.500 0" /><path d="M7.500 7.500H11l-3.500 4.500H11M13 1.500h4.500L13 7h4.500" /></svg>
    </div>
  </footer>
);

export default function App() {
  return (
    <div className="flex h-[1080px] w-[1920px] flex-col overflow-hidden bg-[#f3f2f1] font-['Noto_Sans',sans-serif]">
      <TitleBar />
      <Tabs />
      <Ribbon />
      <main className="flex-1 border-l-2 border-t-2 border-b border-l-[#7a7a7a] border-t-[#757371] border-b-white bg-[#e5e5e5]">
        <ReportsForm />
      </main>
      <Taskbar />
    </div>
  );
}
